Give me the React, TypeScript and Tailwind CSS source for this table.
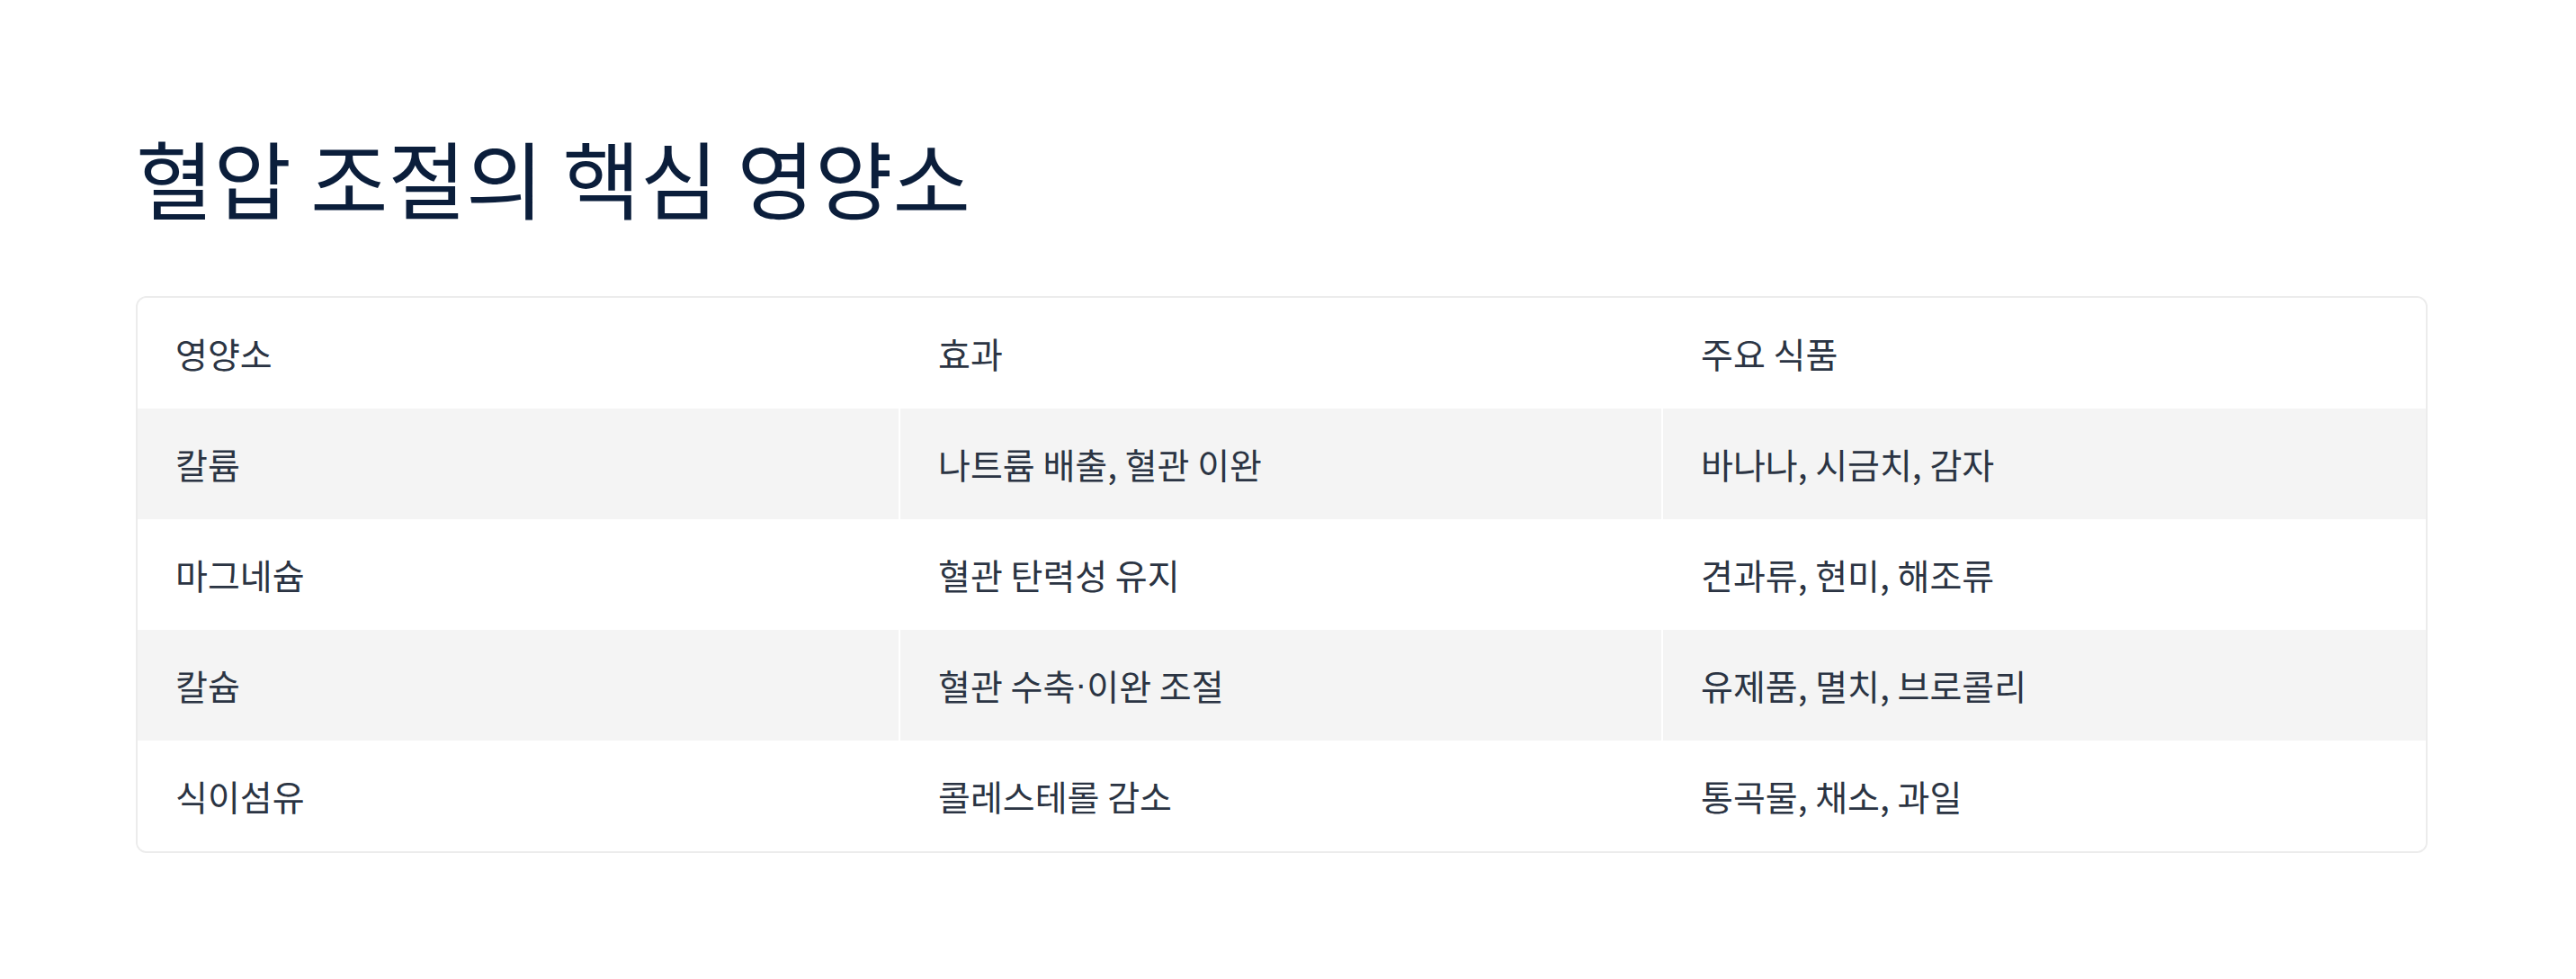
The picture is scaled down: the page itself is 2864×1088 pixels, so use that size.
import React from 'react';

const rows = [
  { name: '칼륨', effect: '나트륨 배출, 혈관 이완', foods: '바나나, 시금치, 감자' },
  { name: '마그네슘', effect: '혈관 탄력성 유지', foods: '견과류, 현미, 해조류' },
  { name: '칼슘', effect: '혈관 수축·이완 조절', foods: '유제품, 멸치, 브로콜리' },
  { name: '식이섬유', effect: '콜레스테롤 감소', foods: '통곡물, 채소, 과일' },
];

const font = { fontFamily: '"Noto Sans CJK KR", "Noto Sans", sans-serif' };

// the middle dot is narrow in the reference, so set it in a latin face
const renderText = (text: string) =>
  text.split('·').map((part, i, arr) => (
    <React.Fragment key={i}>
      {part}
      {i < arr.length - 1 && <span className="font-['Liberation_Sans',sans-serif]">·</span>}
    </React.Fragment>
  ));

const App: React.FC = () => {
  return (
    <div className="min-h-screen bg-white" style={font}>
      <div className="pl-[151px] pt-[137px]">
        <h1 className="text-[94px] leading-[118px] font-normal text-[#0b1e3b]">
          혈압 조절의 핵심 영양소
        </h1>

        <div className="mt-[74px] w-[2548px] rounded-xl border-2 border-[#ececec] overflow-hidden text-[39px] text-[#2b3443]">
          {/* header */}
          <div className="grid grid-cols-3 h-[123px] bg-white">
            <div className="flex items-center px-[42px]">영양소</div>
            <div className="flex items-center px-[42px]">효과</div>
            <div className="flex items-center px-[42px]">주요 식품</div>
          </div>

          {rows.map((r, i) => (
            <div
              key={r.name}
              className={`grid grid-cols-3 h-[123px] ${i % 2 === 0 ? 'bg-[#f4f4f4]' : 'bg-white'}`}
            >
              <div className="flex items-center px-[42px] border-r-2 border-white">{r.name}</div>
              <div className="flex items-center px-[42px] border-r-2 border-white">{renderText(r.effect)}</div>
              <div className="flex items-center px-[42px]">{r.foods}</div>
            </div>
          ))}
        </div>
      </div>
    </div>
  );
};

export default App;
